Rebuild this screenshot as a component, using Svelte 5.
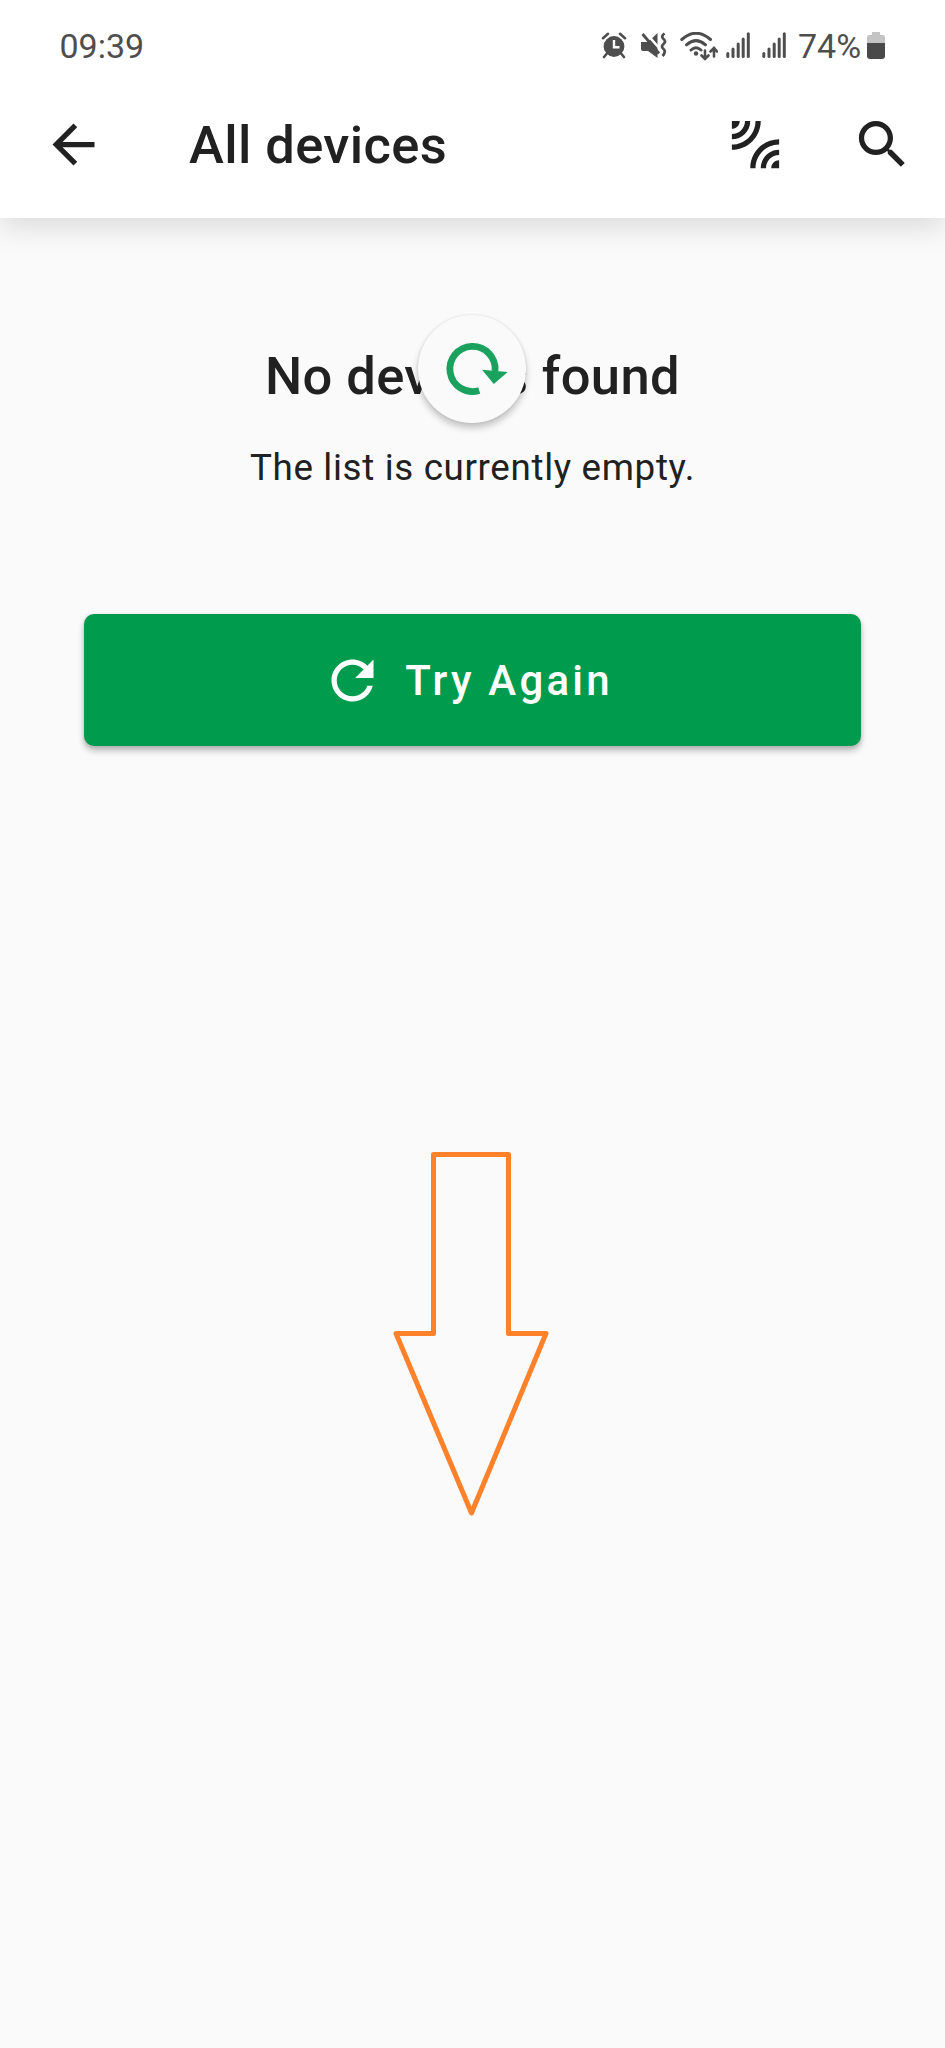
<script>
  const bars = [
    { x: 1.8, y: 21.5 },
    { x: 7, y: 17 },
    { x: 12.2, y: 12 },
    { x: 17.2, y: 7 },
    { x: 22.3, y: 1.8 }
  ];
</script>

{#snippet signal()}
  <svg class="signal" viewBox="0 0 24 27" width="24" height="27">
    {#each bars as b}
      <path d="M{b.x} {b.y}V24.5" stroke="currentColor" stroke-width="3" stroke-linecap="round" />
    {/each}
  </svg>
{/snippet}

<div class="screen">
  <header>
    <div class="status">
      <span class="time">09:39</span>
      <div class="tray">
        <svg class="alarm" viewBox="0 0 26 27" width="26" height="27" fill="currentColor">
          <circle cx="13" cy="14.5" r="10.4" />
          <path d="M2 6.2L7 1.8M24 6.2L19 1.8M5.5 22L3 25M20.500 22L23 25" stroke="currentColor" stroke-width="2.6" stroke-linecap="round" />
          <path d="M13 8V15.200H18.500" fill="none" stroke="#fff" stroke-width="2.4" />
        </svg>
        <svg class="mute" viewBox="0 0 27 27" width="27" height="27">
          <path d="M1 10H8L17.500 1V26L8 19H3Q1 19 1 17Z" fill="currentColor" />
          <path d="M5 0L20 17" stroke="#fff" stroke-width="2.6" />
          <path d="M2.500 2L19 21.500" stroke="currentColor" stroke-width="2.800" />
          <path d="M24.500 1.500Q20.500 4.500 23.500 7Q26.500 9.500 23.500 12Q20.500 14.500 23.500 17Q26.500 19.500 22.500 24" fill="none" stroke="currentColor" stroke-width="2.800" />
        </svg>
        <svg class="wifi" viewBox="0 0 38 30" width="38" height="30" fill="none" stroke="currentColor" stroke-width="3" stroke-linecap="round">
          <path d="M1.800 7.500Q16 -5 30.500 7.500M6.500 12.800Q16 4.500 25.500 12.800M11 18Q16 13.500 21 18" />
          <circle cx="16" cy="21.500" r="2.200" fill="currentColor" stroke="none" />
          <path d="M25 18.500V26.500M21.500 23.500L25 27L28.500 23.500M34 24.500V16.500M30.500 19.500L34 16L37 19.500" stroke-width="2.600" />
        </svg>
        {@render signal()}
        {@render signal()}
        <span class="percent">74%</span>
        <svg class="battery" viewBox="0 0 18 27" width="18" height="27">
          <path d="M5 0H13V3H16Q18 3 18 5V11H0V5Q0 3 2 3H5Z" fill="#c4c4c4" />
          <path d="M0 11H18V24Q18 27 15 27H3Q0 27 0 24Z" fill="#4a4a4a" />
        </svg>
      </div>
    </div>
    <div class="toolbar">
      <svg class="icon" viewBox="0 0 24 24"><path d="M20 11H7.830l5.590-5.590L12 4l-8 8 8 8 1.410-1.410L7.830 13H20v-2z" /></svg>
      <h1>All devices</h1>
      <svg class="icon leak" viewBox="0 0 24 24"><path d="M6 3H3v3c1.660 0 3-1.340 3-3zm8 0h-2c0 4.970-4.030 9-9 9v2c6.080 0 11-4.930 11-11zm-4 0H8c0 2.760-2.240 5-5 5v2c3.870 0 7-3.130 7-7zm0 18h2c0-4.970 4.030-9 9-9v-2c-6.070 0-11 4.930-11 11zm8 0h3v-3c-1.660 0-3 1.340-3 3zm-4 0h2c0-2.760 2.240-5 5-5v-2c-3.870 0-7 3.130-7 7z" /></svg>
      <svg class="icon" viewBox="0 0 24 24"><path d="M15.500 14h-.790l-.280-.270C15.410 12.590 16 11.110 16 9.500 16 5.910 13.090 3 9.500 3S3 5.910 3 9.500 5.910 16 9.500 16c1.610 0 3.090-.590 4.230-1.570l.270.280v.790l5 4.990L20.490 19l-4.990-5zm-6 0C7.010 14 5 11.990 5 9.500S7.010 5 9.500 5 14 7.010 14 9.500 11.990 14 9.500 14z" /></svg>
    </div>
  </header>

  <main>
    <div class="heading">
      <h2>No devices found</h2>
      <div class="refresh">
        <svg viewBox="0 0 108 108" width="108" height="108">
          <path d="M61.200 75.500A22.600 22.600 0 1 1 77 56" fill="none" stroke="#1ba15e" stroke-width="6.800" />
          <path d="M64 54.800L89.700 57L75.800 68.900Z" fill="#1ba15e" />
        </svg>
      </div>
    </div>
    <p>The list is currently empty.</p>
    <button>
      <svg class="icon" viewBox="0 0 24 24"><path d="M17.650 6.350C16.200 4.900 14.210 4 12 4c-4.420 0-7.990 3.580-7.990 8s3.570 8 7.990 8c3.730 0 6.840-2.550 7.730-6h-2.080c-.820 2.330-3.040 4-5.650 4-3.310 0-6-2.690-6-6s2.690-6 6-6c1.660 0 3.140.690 4.220 1.780L13 11h7V4l-2.350 2.350z" /></svg>
      <span>Try Again</span>
    </button>
    <svg class="pull" viewBox="0 0 156 366" width="156" height="366">
      <path d="M40.500 4.500H115.500V183.500H153L78.500 363L3 183.500H40.500Z" fill="none" stroke="#ff812a" stroke-width="5" stroke-linejoin="round" />
    </svg>
  </main>
</div>

<style>
  :global(body) { background: #fafafa; }
  .screen {
    min-height: 2048px;
    background: #fafafa;
    color: #212121;
    font-family: Roboto, sans-serif;
    overflow: hidden;
  }
  header {
    position: relative;
    height: 218px;
    background: #fff;
    box-shadow: 0 10px 26px rgba(0, 0, 0, 0.12);
  }
  .status {
    height: 71px;
    box-sizing: border-box;
    padding: 20px 60px 0 59.5px;
    display: flex;
    justify-content: space-between;
    color: #4e4e4e;
    font-size: 34px;
    line-height: 52px;
  }
  .tray { display: flex; align-items: flex-start; }
  .tray svg { margin-top: 12px; flex: none; }
  .mute { margin-left: 13px; }
  .wifi { margin-left: 13px; }
  .signal { margin-left: 8px; }
  .signal + .signal { margin-left: 12px; }
  .percent { margin-left: 12px; width: 69px; white-space: nowrap; }
  .toolbar {
    height: 147px;
    box-sizing: border-box;
    padding: 0 31px 0 42px;
    display: flex;
    align-items: center;
  }
  .icon { width: 63px; height: 63px; flex: none; fill: currentColor; }
  h1, h2 {
    font-size: 52.5px;
    font-weight: 500;
    line-height: 62px;
    letter-spacing: 0.39px;
    white-space: nowrap;
  }
  h1 { margin: 0 auto 0 84px; }
  h2 { margin: 0; }
  .leak { margin-right: 64px; }
  main {
    padding: 127px 84px 0;
    display: flex;
    flex-direction: column;
    align-items: center;
  }
  .heading { position: relative; }
  .refresh {
    position: absolute;
    left: 50%;
    top: -30px;
    width: 108px;
    height: 108px;
    margin-left: -54px;
    border-radius: 50%;
    background: #fafafa;
    box-shadow: 0 5px 7px rgba(0, 0, 0, 0.22), 0 0 3px rgba(0, 0, 0, 0.1);
  }
  .refresh svg { display: block; }
  p { margin: 39px 0 0; font-size: 36.75px; line-height: 44px; letter-spacing: 0.66px; white-space: nowrap; }
  button {
    width: 777px;
    height: 132px;
    margin: 124px 0 0;
    padding: 0 11px 0 0;
    border: 0;
    border-radius: 10px;
    display: flex;
    align-items: center;
    justify-content: center;
    gap: 21px;
    background: #009b4d;
    color: #fff;
    font: 500 42px Roboto, sans-serif;
    letter-spacing: 3.2px;
    box-shadow: 0 5px 6px rgba(0, 0, 0, 0.24), 0 1px 4px rgba(0, 0, 0, 0.12);
  }
  .pull { margin: 404px 4px 0 0; }
</style>
